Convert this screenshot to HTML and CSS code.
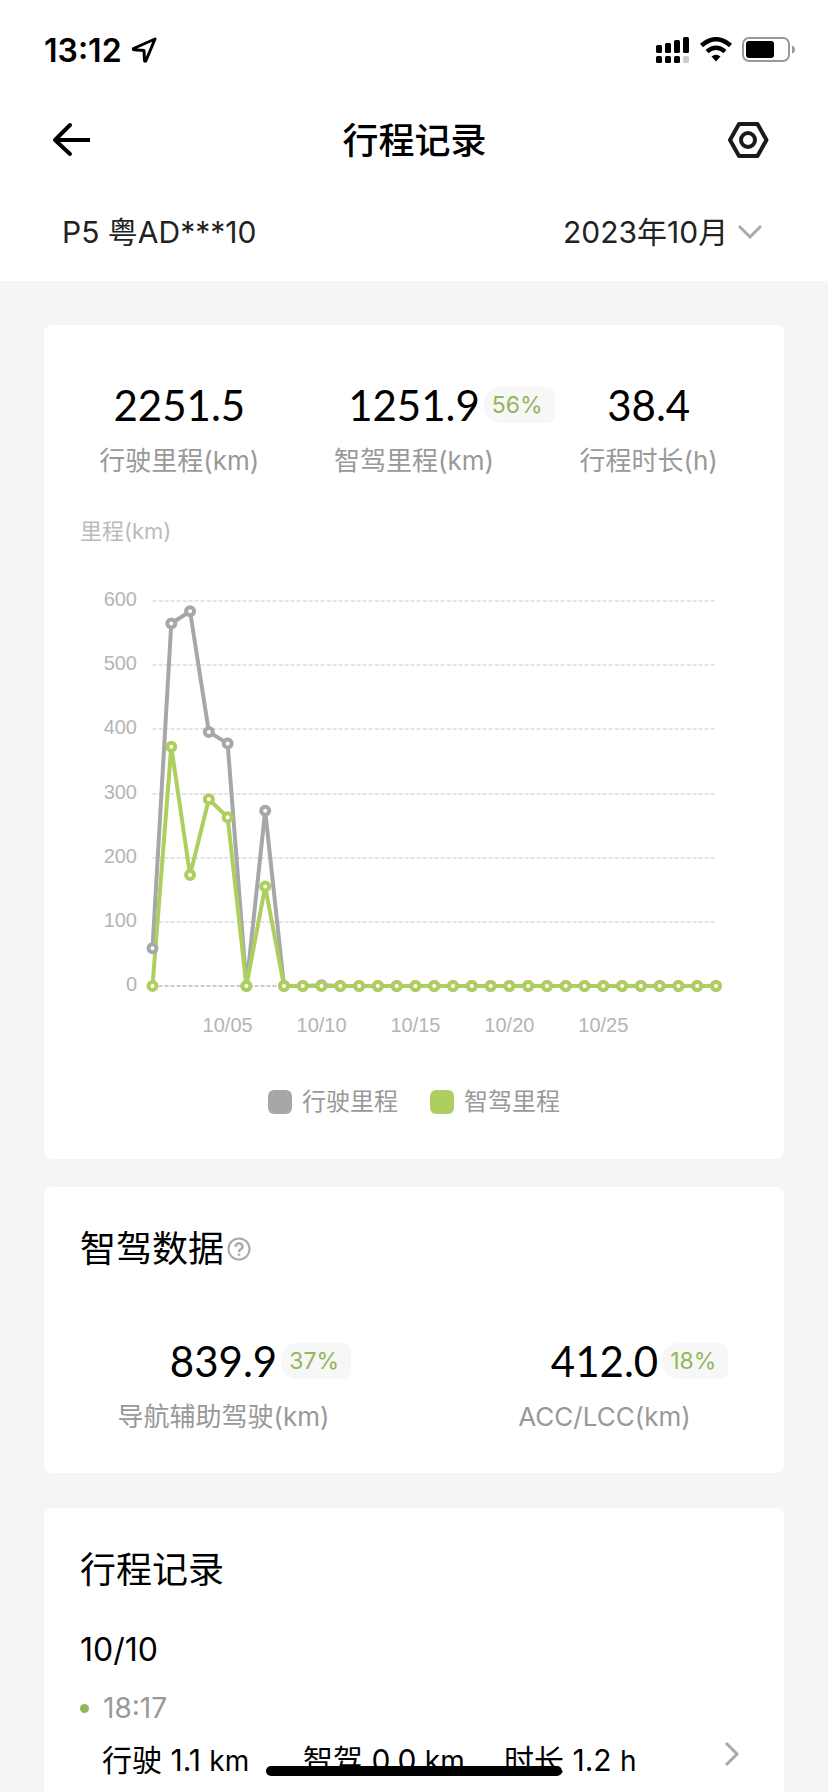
FILE: index.html
```html
<!DOCTYPE html>
<html lang="zh-CN">
<head>
    <meta charset="UTF-8">
    <meta name="viewport" content="width=device-width, initial-scale=1.0">
    <title>行程记录</title>
    <link rel="stylesheet" href="styles.css">
</head>
<body>
    <header class="top">
        <div class="status-bar">
            <div class="status-left">
                <span>13:12</span>
                <svg width="26" height="26" viewBox="0 0 26 26" fill="none" stroke="#000" stroke-width="3" stroke-linejoin="round">
                    <path d="M24 2 L2.500 11.500 Q2 12.500 3 12.700 L13 13.500 L13.500 23.500 Q14.200 25 15 23.500 Z"/>
                </svg>
            </div>
            <div class="status-right">
                <svg width="34" height="26" viewBox="0 0 34 26">
                    <rect x="0" y="8" width="6" height="8" rx="1.500"/>
                    <rect x="9" y="6" width="6" height="10" rx="1.500"/>
                    <rect x="18" y="3" width="6" height="13" rx="1.500"/>
                    <rect x="27" y="0" width="6" height="16" rx="1.500"/>
                    <rect x="0" y="19" width="6" height="7" rx="1.500"/>
                    <rect x="9" y="19" width="6" height="7" rx="1.500"/>
                    <rect x="18" y="19" width="6" height="7" rx="1.500"/>
                    <rect x="27" y="19" width="6" height="7" rx="1.500" fill="#ccc"/>
                </svg>
                <svg width="32" height="26" viewBox="0 0 32 26">
                    <path d="M1.500 8.500 Q16 -4 30.500 8.500" fill="none" stroke="#000" stroke-width="4.500"/>
                    <path d="M7 14.500 Q16 7 25 14.500" fill="none" stroke="#000" stroke-width="4.500"/>
                    <path d="M11.500 19.500 Q16 16 20.500 19.500 L16 24.500 Z"/>
                </svg>
                <svg width="54" height="26" viewBox="0 0 54 26">
                    <rect x="1" y="1" width="46" height="23" rx="6" fill="none" stroke="#999" stroke-width="2"/>
                    <rect x="4" y="4" width="28" height="17" rx="3"/>
                    <path d="M50 8.500 Q53 9.500 53 12.500 Q53 15.500 50 16.500 Z" fill="#999"/>
                </svg>
            </div>
        </div>

        <nav class="nav">
            <button class="icon-btn" aria-label="返回">
                <svg width="42" height="42" viewBox="0 0 42 42" fill="none" stroke="#000" stroke-width="4" stroke-linecap="round" stroke-linejoin="round">
                    <path d="M18 6 L3 21 L18 35"/>
                    <path d="M4 21 H38" stroke-linecap="butt"/>
                </svg>
            </button>
            <h1>行程记录</h1>
            <button class="icon-btn" aria-label="设置">
                <svg width="42" height="42" viewBox="0 0 42 42" fill="none" stroke="#1a1a1a" stroke-width="4" stroke-linejoin="round">
                    <path d="M12 5 H30.500 L39.500 21 L30.500 37 H12 L3 21 Z"/>
                    <circle cx="21" cy="21" r="7"/>
                </svg>
            </button>
        </nav>

        <div class="filter">
            <span>P5 粤AD***10</span>
            <label class="month">
                <select aria-label="月份">
                    <option>2023年10月</option>
                </select>
                <svg width="24" height="16" viewBox="0 0 24 16" fill="none" stroke="#aaa" stroke-width="3">
                    <path d="M1 2 L12 13 L23 2"/>
                </svg>
            </label>
        </div>
    </header>

    <main>
        <section class="card overview">
            <div class="stats stats-three">
                <div class="stat">
                    <div class="stat-value">2251.5</div>
                    <div class="stat-label">行驶里程(km)</div>
                </div>
                <div class="stat">
                    <div class="stat-value">1251.9<span class="badge">56%</span></div>
                    <div class="stat-label">智驾里程(km)</div>
                </div>
                <div class="stat">
                    <div class="stat-value">38.4</div>
                    <div class="stat-label">行程时长(h)</div>
                </div>
            </div>

            <div class="chart-unit">里程(km)</div>
            <svg class="chart" id="chart" viewBox="0 0 668 500" role="img" aria-label="每日里程"></svg>

            <div class="legend">
                <span class="legend-item"><i class="swatch swatch-drive"></i>行驶里程</span>
                <span class="legend-item"><i class="swatch swatch-smart"></i>智驾里程</span>
            </div>
        </section>

        <section class="card smart">
            <h2>智驾数据
                <button class="help-btn" aria-label="说明">
                    <svg width="24" height="24" viewBox="0 0 24 24" fill="none" stroke="#aaa" stroke-width="2">
                        <circle cx="12" cy="12" r="10.500"/>
                        <path d="M8.800 9.800 A3.300 3.200 0 1 1 13.800 12.200 Q12 13.200 12 15" stroke-width="2.500"/>
                        <path d="M12 16.500 V18.800" stroke-width="2.500"/>
                    </svg>
                </button>
            </h2>
            <div class="stats stats-two">
                <div class="stat">
                    <div class="stat-value">839.9<span class="badge">37%</span></div>
                    <div class="stat-label">导航辅助驾驶(km)</div>
                </div>
                <div class="stat">
                    <div class="stat-value">412.0<span class="badge">18%</span></div>
                    <div class="stat-label">ACC/LCC(km)</div>
                </div>
            </div>
        </section>

        <section class="card trips">
            <h2>行程记录</h2>
            <h3>10/10</h3>
            <div class="trip-time">18:17</div>
            <a class="trip" href="#trip">
                <span>行驶 1.1 <small>km</small></span>
                <span>智驾 0.0 <small>km</small></span>
                <span>时长 1.2 <small>h</small></span>
                <svg width="16" height="24" viewBox="0 0 16 24" fill="none" stroke="#aaa" stroke-width="3">
                    <path d="M2 1 L13 12 L2 23"/>
                </svg>
            </a>
        </section>
    </main>

    <div class="home-indicator"></div>

    <script>
        const DAYS = 31;
        const plot = {left: 72.5, right: 636, top: 54, bottom: 439, max: 600};
        const series = [
            {name: 'drive', values: [59, 565, 584, 396, 378, 0, 273, 0, 0, 1]},
            {name: 'smart', values: [0, 373, 173, 291, 263, 0, 155]}
        ];

        function xOf(day) {
            return plot.left + (day - 1) * (plot.right - plot.left) / (DAYS - 1);
        }

        function yOf(value) {
            return plot.bottom - value * (plot.bottom - plot.top) / plot.max;
        }

        function renderChart() {
            let html = '';
            // 网格和纵轴
            for (let v = 0; v <= plot.max; v += 100) {
                const y = Math.round(yOf(v));
                html += `<line class="grid ${v === 0 ? 'grid-base' : ''}" x1="${plot.left}" x2="${plot.right}" y1="${y}" y2="${y}"/>`;
                html += `<text class="axis axis-y" x="57" y="${y + 5}">${v}</text>`;
            }
            // 横轴
            for (let d = 5; d <= 25; d += 5) {
                html += `<text class="axis axis-x" x="${xOf(d)}" y="485">10/${String(d).padStart(2, '0')}</text>`;
            }
            // 折线在下，圆点在上
            const points = series.map(s => Array.from({length: DAYS}, (_, i) => [xOf(i + 1), yOf(s.values[i] || 0)]));
            series.forEach((s, i) => {
                html += `<polyline class="line ${s.name}" points="${points[i].join(' ')}"/>`;
            });
            series.forEach((s, i) => {
                html += points[i].map(p => `<circle class="dot ${s.name}" cx="${p[0]}" cy="${p[1]}" r="4"/>`).join('');
            });
            document.getElementById('chart').innerHTML = html;
        }

        renderChart();
    </script>
</body>
</html>
```
FILE: styles.css
```css
:root {
    --bg: #f5f5f5;
    --muted: #999;
    --light: #b5b5b5;
    --drive: #a5a7a9;
    --smart: #aecf60;
    --accent: #93b65a;
}

* {
    margin: 0;
    padding: 0;
    box-sizing: border-box;
}

body {
    min-height: 100vh;
    display: flex;
    flex-direction: column;
    font-family: Inter, "Noto Sans CJK SC", sans-serif;
    font-size: 30px;
    background: var(--bg);
    color: #000;
}

button {
    border: none;
    background: none;
    cursor: pointer;
}

svg {
    display: block;
}

.top {
    background: white;
}

.status-bar {
    height: 100px;
    padding: 0 32px 0 44px;
    display: flex;
    align-items: center;
    justify-content: space-between;
}

.status-left {
    display: flex;
    align-items: center;
    gap: 9px;
    font-size: 32px;
    font-weight: 600;
}

.status-right {
    display: flex;
    gap: 10px;
}

.nav {
    height: 80px;
    padding: 0 59px 0 52px;
    display: flex;
    align-items: center;
    justify-content: space-between;
}

.nav h1 {
    padding: 2px 0 0 8px;
    font-size: 36px;
    font-weight: 500;
    line-height: 48px;
}

.filter {
    padding: 30px 66px 27px 62px;
    display: flex;
    justify-content: space-between;
    line-height: 44px;
    color: #222;
}

.month {
    display: flex;
    align-items: center;
    gap: 9px;
}

.month select {
    appearance: none;
    border: none;
    background: none;
    font: inherit;
    line-height: 44px;
    color: inherit;
}

main {
    flex: 1;
    display: flex;
    flex-direction: column;
    padding: 44px 44px 0;
}

.card {
    background: white;
    border-radius: 8px;
    padding: 38px 36px;
}

.card h2 {
    display: flex;
    align-items: center;
    gap: 3px;
    font-size: 36px;
    font-weight: 400;
    line-height: 48px;
}

.stats {
    display: grid;
}

.stats-three {
    grid-template-columns: repeat(3, 1fr);
    margin: 0 -18px;
}

.stats-two {
    grid-template-columns: 1fr 1fr;
    gap: 94px;
    margin-top: 64px;
}

.stat {
    display: flex;
    flex-direction: column;
    align-items: center;
    gap: 14px;
}

.stat-value {
    position: relative;
    font-family: Lato, sans-serif;
    font-size: 42px;
    line-height: 48px;
}

.stat-label {
    font-size: 26px;
    line-height: 36px;
    color: var(--muted);
    white-space: nowrap;
}

/* 占比标签挂在数字右侧，不影响数字居中 */
.badge {
    position: absolute;
    left: 100%;
    top: 6px;
    margin-left: 4px;
    padding: 0 12px 0 8px;
    border-radius: 16px 8px 8px 16px;
    background: #f7f7f7;
    color: var(--accent);
    font-family: Inter, sans-serif;
    font-size: 23px;
    line-height: 36px;
}

.overview {
    padding-top: 56px;
    padding-bottom: 41px;
}

.chart-unit {
    margin-top: 36px;
    font-size: 22px;
    line-height: 32px;
    color: #bbb;
}

.chart {
    width: 100%;
}

.grid {
    stroke: #e3e3e3;
    stroke-width: 2;
    stroke-dasharray: 4 2;
}

.grid-base {
    stroke: #ccc;
}

.axis {
    font-family: "Liberation Sans", sans-serif;
    font-size: 20px;
    fill: var(--light);
}

.axis-y {
    text-anchor: end;
}

.axis-x {
    text-anchor: middle;
}

.line {
    fill: none;
    stroke-width: 4;
    stroke-linejoin: round;
}

.dot {
    fill: white;
    stroke-width: 4;
}

.drive {
    stroke: var(--drive);
}

.smart {
    stroke: var(--smart);
}

.legend {
    margin-top: 39px;
    display: flex;
    justify-content: center;
    gap: 32px;
    font-size: 24px;
    line-height: 32px;
    color: var(--muted);
}

.legend-item {
    display: flex;
    align-items: center;
    gap: 10px;
}

.swatch {
    width: 24px;
    height: 24px;
    border-radius: 6px;
}

.swatch-drive {
    background: var(--drive);
}

.swatch-smart {
    background: var(--smart);
}

.smart.card {
    margin-top: 28px;
}

.trips {
    flex: 1;
    margin-top: 35px;
    padding-bottom: 0;
    border-radius: 8px 8px 0 0;
}

.trips h3 {
    margin-top: 36px;
    font-size: 32px;
    font-weight: 400;
    line-height: 40px;
}

.trip-time {
    margin-top: 20px;
    display: flex;
    align-items: center;
    gap: 14px;
    font-size: 28px;
    line-height: 36px;
    color: var(--muted);
}

.trip-time::before {
    content: "";
    width: 9px;
    height: 9px;
    border-radius: 50%;
    background: var(--accent);
}

.trip {
    margin-top: 14px;
    padding: 0 8px 0 22px;
    display: flex;
    align-items: flex-start;
    line-height: 40px;
    color: inherit;
    text-decoration: none;
}

.trip span {
    width: 201px;
}

.trip small {
    font-size: 28px;
}

.trip svg {
    margin: 2px 0 0 auto;
}

.home-indicator {
    position: fixed;
    left: 50%;
    bottom: 16px;
    width: 296px;
    height: 10px;
    border-radius: 5px;
    background: #000;
    transform: translateX(-50%);
}
```
